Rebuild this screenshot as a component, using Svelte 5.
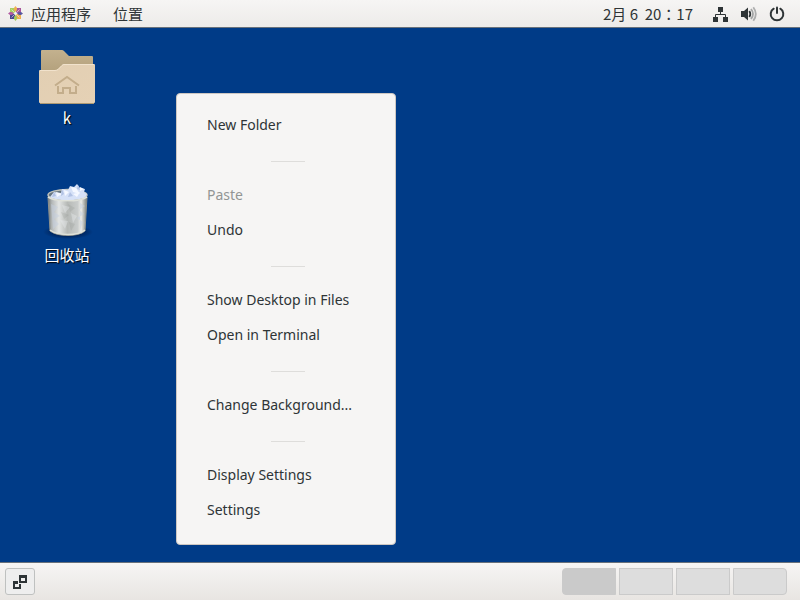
<script>
  const groups = [
    [{ label: 'New Folder' }],
    [{ label: 'Paste', disabled: true }, { label: 'Undo' }],
    [{ label: 'Show Desktop in Files' }, { label: 'Open in Terminal' }],
    [{ label: 'Change Background...' }],
    [{ label: 'Display Settings' }, { label: 'Settings' }],
  ];
  let workspace = $state(0);
</script>

<div class="screen">
  <header class="bar top">
    <nav>
      <button class="apps">
        <svg width="15" height="15" viewBox="0 0 15 15" aria-hidden="true">
          <path fill="#a9cf62" d="M2 2h5v5H2z" />
          <path fill="#a8569b" d="M8 2h5v5H8z" />
          <path fill="#4a478f" d="M2 8h5v5H2z" />
          <path fill="#eeb04f" d="M8 8h5v5H8z" />
          <path fill="#eeb04f" d="M7.500 0L9 2v2L7.500 6 6 4V2z" />
          <path fill="#5a579f" d="M15 7.500L13 9h-2L9 7.500 11 6h2z" />
          <path fill="#a0c85a" d="M7.500 15L6 13v-2l1.500-2L9 11v2z" />
          <path fill="#b05aa0" d="M0 7.500L2 6h2l2 1.500L4 9H2z" />
          <path stroke="#f2f1f0" stroke-width=".8" d="M3.500 3.500l8 8M11.500 3.500l-8 8" opacity=".75" />
        </svg>
        应用程序
      </button>
      <button class="places">位置</button>
    </nav>
    <div class="status">
      <button class="clock">2月 6&nbsp; 20：17</button>
      <button class="tray" aria-label="System">
        <svg width="16" height="16" viewBox="0 0 16 16" aria-hidden="true">
          <path fill="#2e3436" d="M5 1h5v5H5zM0 11h5v5H0zM10 11h5v5h-5z" />
          <path fill="none" stroke="#2e3436" d="M7.500 5v3.500M2.500 11V8.500h10V11" />
        </svg>
        <svg width="16" height="16" viewBox="0 0 16 16" aria-hidden="true">
          <path fill="#2e3436" d="M0 5h3l4-3.500v13L3 11H0z" />
          <path fill="none" stroke="#2e3436" stroke-width="1.800" d="M8.300 5q2 3 0 6" />
          <path fill="none" stroke="#2e3436" stroke-width="1.800" d="M10 3q4 5 0 10" opacity=".4" />
          <path fill="none" stroke="#2e3436" stroke-width="1.800" d="M12.300 1.200q5 6.800 0 13.600" opacity=".35" />
        </svg>
        <svg width="16" height="16" viewBox="0 0 16 16" aria-hidden="true">
          <path fill="none" stroke="#2e3436" stroke-width="2" d="M4.700 2.700a6.300 6.300 0 1 0 6.600 0" stroke-linecap="round" />
          <path stroke="#2e3436" stroke-width="2" stroke-linecap="round" d="M8 1.500v5.500" />
        </svg>
      </button>
    </div>
  </header>

  <main>
    <button class="launcher">
      <svg width="64" height="64" viewBox="0 0 64 64" aria-hidden="true">
        <defs>
          <linearGradient id="back" x1="0" y1="0" x2="0" y2="1">
            <stop offset="0" stop-color="#c3b18e" /><stop offset="1" stop-color="#ad9a75" />
          </linearGradient>
          <linearGradient id="front" x1="0" y1="0" x2="1" y2="1">
            <stop offset="0" stop-color="#e2cfb3" /><stop offset="1" stop-color="#e5d1b5" />
          </linearGradient>
        </defs>
        <path fill="url(#back)" d="M6 6q0-1 1-1h20q1 0 2 1l5 5h23q1 0 1 1v24H6z" />
        <path fill="url(#front)" d="M4 26q0-1 1-1h15q2 0 3-1l3-3q2-2 3-2h30q1 0 1 1v37q0 1-1 1H5q-1 0-1-1z" />
        <path fill="none" stroke="#f1e2cc" d="M5 25.500h15q2 0 3-1l4-4q1-1 2-1h30" />
        <path fill="none" stroke="#ad9974" d="M5 58.500h54" />
        <path fill="none" stroke="#c3ad8b" stroke-width="2" d="M20 40.500l12-8.500 12 8.500M23 41v7h5v-5h7v5h6v-7" />
      </svg>
      <span>k</span>
    </button>
    <button class="launcher">
      <svg width="64" height="64" viewBox="0 0 64 64" aria-hidden="true">
        <defs>
          <linearGradient id="metal">
            <stop offset="0" stop-color="#777b78" /><stop offset=".1" stop-color="#b4b8b8" />
            <stop offset=".28" stop-color="#e3e5e4" /><stop offset=".5" stop-color="#b6b9b6" />
            <stop offset=".76" stop-color="#c9cccb" /><stop offset=".85" stop-color="#ecece8" />
            <stop offset="1" stop-color="#777c78" />
          </linearGradient>
          <radialGradient id="shade">
            <stop offset=".6" stop-color="#001d4f" stop-opacity=".7" /><stop offset="1" stop-color="#001d4f" stop-opacity="0" />
          </radialGradient>
        </defs>
        <ellipse cx="33" cy="50" rx="25" ry="7" fill="url(#shade)" />
        <ellipse cx="32.500" cy="13" rx="19.500" ry="5.500" fill="#667580" stroke="#bfc2bb" stroke-width="1.500" />
        <path fill="#d6e1f7" d="M15 15l4-5 7 1 1-4 6 1 2-4 4 1 3-3 3 4 5 1-1 3 3 2-2 4-8 4H22z" />
        <path fill="#f5f8ff" d="M21 10l6 2-5 3zM29 8l5 2-4 4zM36 5l5 1 4 6-7-2zM45 5l4 2-4 2zM38 12l7-2-3 5z" />
        <path fill="#b2c2e4" d="M27 7l2 5-3 2zM35 10l3 4-5 1zM43 3l-1 4 3 1zM19 10l2 4-4 1z" />
        <path fill="url(#metal)" stroke="#8c908c" d="M13 15c8 5 31 5 39 0l-2 34c-6 6-28 6-35 0z" />
        <path fill="#c6cfdf" opacity=".5" d="M16 22l7 3-4 5 6 4-6 3 5 5-6 5zM45 21l5 3-6 4 5 4-7 4 6 4-3 8z" />
        <path fill="#eef1f4" opacity=".35" d="M27 23l8 2-5 6zM36 31l6 3-4 7zM25 38l8 1-3 8z" />
        <path fill="#878c89" opacity=".2" d="M33 22l7 4-5 4zM26 30l8 3-5 4zM34 40l6 2-4 7z" />
        <path fill="none" stroke="#dfe1d9" stroke-width="1.500" d="M13 15c8 5 31 5 39 0M15 48c8 6 28 6 35 0" />
      </svg>
      <span>回收站</span>
    </button>

    <div class="menu" role="menu">
      {#each groups as group, i}
        {#if i > 0}<hr />{/if}
        {#each group as item}
          <button role="menuitem" disabled={item.disabled}>{item.label}</button>
        {/each}
      {/each}
    </div>
  </main>

  <footer class="bar bottom">
    <button class="show" aria-label="Show desktop">
      <svg width="16" height="16" viewBox="0 0 16 16" aria-hidden="true">
        <path fill="#2e3436" fill-rule="evenodd" d="M7 1h8v8H7zM9 4v3h4V4z" />
        <path fill="#2e3436" d="M1 7h5v3H3v3h4v-3h2v5H1z" />
      </svg>
    </button>
    <div class="workspaces">
      {#each [0, 1, 2, 3] as n}
        <button class:active={workspace === n} aria-label={`Workspace ${n + 1}`} onclick={() => (workspace = n)}></button>
      {/each}
    </div>
  </footer>
</div>

<style>
  .screen {
    display: flex;
    flex-direction: column;
    min-height: 100vh;
    background: #003b87;
    color: #2e3436;
    font: 15px/20px "Noto Sans CJK SC", sans-serif;
  }
  button {
    margin: 0;
    padding: 0;
    border: 0;
    background: none;
    color: inherit;
    font: inherit;
  }
  svg { display: block; flex: none; }
  .bar {
    display: flex;
    justify-content: space-between;
    align-items: center;
    box-sizing: border-box;
    background: linear-gradient(#f6f5f4, #edebe9);
  }
  .top { height: 28px; border-bottom: 1px solid #68717b; padding: 0 15px 0 8px; }
  nav, .status, .apps, .tray { display: flex; align-items: center; }
  nav { gap: 22px; }
  .apps { gap: 8px; }
  .status { gap: 20px; }
  .clock { font-family: "Noto Sans CJK TC", sans-serif; }
  .tray { gap: 12px; }
  main { position: relative; flex: 1; padding: 17px 0 0 17px; }
  .launcher {
    display: flex;
    flex-direction: column;
    align-items: center;
    width: 100px;
    height: 137px;
    color: white;
    line-height: 18px;
    text-shadow: 1px 1px 1px black;
  }
  .menu {
    position: absolute;
    top: 65px;
    left: 176px;
    display: flex;
    flex-direction: column;
    box-sizing: border-box;
    width: 220px;
    padding: 13px 0 17px;
    border: 1px solid #cdc7c2;
    border-radius: 4px;
    background: #f6f5f4;
    font: 14px/20px "Noto Sans", sans-serif;
  }
  .menu button { height: 35px; padding: 0 30px; text-align: left; }
  .menu button:not(:disabled):hover { background: #e8e6e3; }
  .menu button:disabled { color: #929595; }
  hr { width: 34px; height: 1px; margin: 19px 0 15px 94px; border: 0; background: #dedddb; }
  .bottom { height: 38px; border-top: 1px solid #68717b; padding: 0 13px 0 5px; background: linear-gradient(#f6f5f4, #e8e5e2); }
  .show {
    display: grid;
    place-items: center;
    box-sizing: border-box;
    width: 30px;
    height: 27px;
    border: 1px solid #bfc1c0;
    border-radius: 3px;
    background: #eeeeee;
  }
  .workspaces { display: flex; gap: 3px; }
  .workspaces button { box-sizing: border-box; width: 54px; height: 27px; border: 1px solid #cacaca; background: #dddddd; }
  .workspaces button.active { background: #cacaca; }
  .workspaces button:first-child { border-radius: 4px 0 0 4px; }
  .workspaces button:last-child { border-radius: 0 4px 4px 0; }
</style>
